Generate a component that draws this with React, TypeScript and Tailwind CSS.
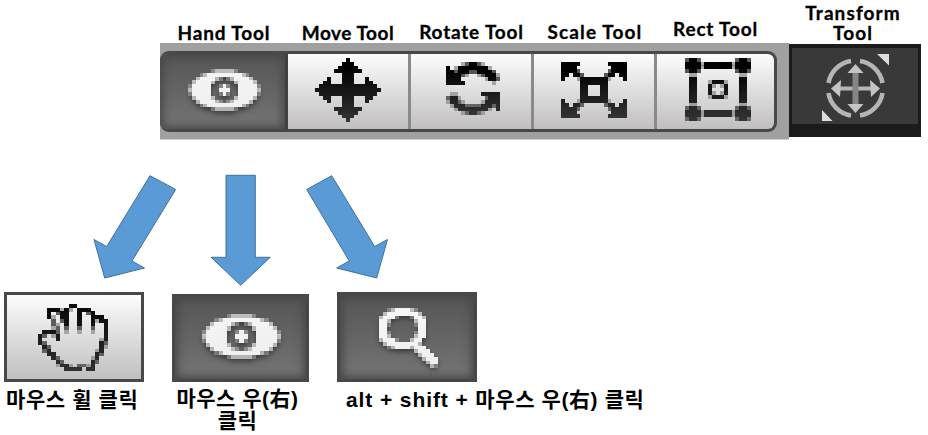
import React from "react";

type PixelProps = { rows: string[]; id: string; from: string; to: string; className: string };

const ALPHA: Record<string, number> = { "#": 1, "+": 0.65, "-": 0.3 };

function Pixels({ rows, id, from, to, className }: PixelProps) {
  const w = rows[0].length;
  const h = rows.length;
  const rects: React.ReactNode[] = [];
  rows.forEach((row, y) => {
    let x = 0;
    while (x < row.length) {
      const c = row[x];
      let end = x + 1;
      while (end < row.length && row[end] === c) end++;
      if (ALPHA[c]) {
        rects.push(<rect key={`${x}-${y}`} x={x} y={y} width={end - x} height={1.04} fillOpacity={ALPHA[c]} />);
      }
      x = end;
    }
  });
  return (
    <svg viewBox={`0 0 ${w} ${h}`} preserveAspectRatio="none" className={className}>
      <defs>
        <linearGradient id={id} gradientUnits="userSpaceOnUse" x1="0" y1="0" x2="0" y2={h}>
          <stop offset="0.15" stopColor={from} />
          <stop offset="1" stopColor={to} />
        </linearGradient>
      </defs>
      <g fill={`url(#${id})`} shapeRendering="crispEdges">{rects}</g>
    </svg>
  );
}

const MOVE = [
  "........#........",
  ".......###.......",
  "......#####......",
  ".....#######.....",
  ".......###.......",
  "...#...###...#...",
  "..##...###...##..",
  ".###############.",
  "#################",
  ".###############.",
  "..##...###...##..",
  "...#...###...#...",
  ".......###.......",
  ".....#######.....",
  "......#####......",
  ".......###.......",
  "........#........",
];

const ROTATE = [
  "....-+##+-....",
  "#.-########-..",
  "##+###++####+.",
  "####+-..-+###-",
  "####......-##+",
  "#####.......-.",
  "..............",
  "..............",
  ".--......#####",
  "+##-......+###",
  "-##+-....-####",
  ".-###++++###+#",
  "..-########-.#",
  "....-+##+-....",
];

const SCALE = [
  "#####.......#####",
  "####.........####",
  "####+.......+####",
  "##.##+.....+##.##",
  "#...-#######-...#",
  ".....#######.....",
  ".....##...##.....",
  ".....##...##.....",
  ".....##...##.....",
  ".....#######.....",
  "#...-#######-...#",
  "##.##+.....+##.##",
  "####+.......+####",
  "####.........####",
  "#####.......#####",
];

const RECT = [
  "+##+.........+##+",
  "####-#######-####",
  "####-#######-####",
  "+##+.........+##+",
  ".--...........--.",
  ".##...........##.",
  ".##...-###-...##.",
  ".##...#-.-#...##.",
  ".##...#...#...##.",
  ".##...#-.-#...##.",
  ".##...-###-...##.",
  ".##...........##.",
  ".--...........--.",
  "+##+.........+##+",
  "####-#######-####",
  "####-#######-####",
  "+##+.........+##+",
];

const EYE = [
  "......-+++++-......",
  "...-+#########+-...",
  "..+####+-.-+####+..",
  ".+####+.....+####+.",
  "-#####..-#-..#####-",
  "+#####..###..#####+",
  "-#####..-#-..#####-",
  ".+####+.....+####+.",
  "..+####+-.-+####+..",
  "...-+#########+-...",
  "......-+++++-......",
];

const HAND = [
  ".......##.......",
  "..###-#-.###....",
  "..#.+##..#.+#...",
  "..#-.##..#..###.",
  "...+.+#..#..#-##",
  "...+-.#..#..#..#",
  "...-+.+..+..+..#",
  ".###+.-..-..-..#",
  "#+.-#..........#",
  "#...#.........-#",
  "#+............#+",
  ".#+...........#-",
  ".+#..........-#.",
  "..##.........#+.",
  "...#+.......-#..",
  "....#+......#+..",
  "....-##-.++-#...",
  "......####.##...",
];

const MAGNIFIER = [
  "..-+####+-.....",
  ".+########+....",
  "+###-...-##+...",
  "##+......+##...",
  "##-......-##...",
  "##........##...",
  "##-......-##...",
  "##+......+##...",
  "+###-...+##....",
  ".+########+....",
  "..-+####+###...",
  ".........+###..",
  "..........+###.",
  "...........+###",
  "............+##",
  ".............+-",
];

const LIGHT = "bg-linear-to-b from-[#fdfdfd] to-[#c1bfc0]";
const DARK = "bg-linear-to-b from-[#555] to-[#757575] shadow-[inset_0_0_9px_3px_#484848]";

function Label({ className, children }: { className: string; children: React.ReactNode }) {
  return (
    <div className={`shrink-0 whitespace-nowrap text-center font-['Lato',sans-serif] text-[19px] leading-[20px] font-bold [-webkit-text-stroke:0.3px_black] ${className}`}>
      {children}
    </div>
  );
}

function Cell({ className, children }: { className: string; children: React.ReactNode }) {
  return <div className={`flex shrink-0 items-start ${className}`}>{children}</div>;
}

function Eye({ id, className }: { id: string; className: string }) {
  return (
    <div className={className}>
      <Pixels rows={EYE} id={id} from="#f4f4f4" to="#efefef" className="h-full w-full drop-shadow-[0_4px_2px_#3d3d3d]" />
    </div>
  );
}

function TransformIcon() {
  return (
    <svg viewBox="822 53 68 69" className="ml-[30px] mt-[5px] h-[69px] w-[68px] blur-[0.5px]" fill="none">
      <g stroke="#b5b5b5" strokeWidth="4.6">
        <path d="M851 61A27 27 0 0 0 828.5 83" />
        <path d="M860 61A27 27 0 0 1 882.500 83" />
        <path d="M828.500 93A27 27 0 0 0 851 115.500" />
        <path d="M882.500 93A27 27 0 0 1 860 115.500" />
        <path d="M838 88.500H873" strokeWidth="4" />
        <path d="M855.500 70V107" stroke="#858585" strokeWidth="6" />
      </g>
      <g fill="#c4c4c4">
        <path d="M855.500 64L863.500 73H847.500Z" />
        <path d="M855.500 113L863.500 104H847.500Z" />
        <path d="M831 88.500L841 80L840 97Z" />
        <path d="M880 88.500L870 80L871 97Z" />
        <path d="M877 54H889V65.500Z" fill="#ddd" />
        <path d="M822 110V121H832.500Z" fill="#ddd" />
      </g>
    </svg>
  );
}

const KR = "font-['Liberation_Sans','Noto_Sans_CJK_KR',sans-serif] font-bold";

export default function App() {
  return (
    <div className="h-[435px] w-[928px] overflow-hidden bg-white text-black">
      <div className="flex h-[43px] items-end pl-[160px]">
        <Label className="w-[128px] tracking-[0.85px]">Hand Tool</Label>
        <Label className="w-[120px] tracking-[0.5px]">Move Tool</Label>
        <Label className="w-[127px] pb-[1px] tracking-[0.8px]">Rotate Tool</Label>
        <Label className="w-[120px] pb-[1px] tracking-[1.1px]">Scale Tool</Label>
        <Label className="w-[121px] pb-[4px] tracking-[0.8px]">Rect Tool</Label>
        <Label className="w-[154px] tracking-[1.1px]">
          Transform
          <br />
          Tool
        </Label>
      </div>

      <div className="flex h-[97px] items-start pl-[160px]">
        <div className="h-[97px] w-[629px] shrink-0 border-b border-[#d0d0d0] bg-[#a0a0a0] pt-[8px]">
          <div className="flex h-[81px] w-[617px] overflow-hidden rounded-[9px] border-y-[3px] border-r-[3px] border-[#484848] bg-[#8a8a8a]">
            <Cell className={`w-[128px] border-r-[3px] border-[#404040] ${DARK}`}>
              <Eye id="eyeTop" className="ml-[28px] mt-[15px] h-[42px] w-[73px]" />
            </Cell>
            <Cell className={`w-[120px] ${LIGHT}`}>
              <Pixels rows={MOVE} id="move" from="#000" to="#343434" className="ml-[27px] mt-[4px] h-[64px] w-[66px]" />
            </Cell>
            <Cell className={`ml-[3px] w-[120px] ${LIGHT}`}>
              <Pixels rows={ROTATE} id="rotate" from="#000" to="#343434" className="ml-[35px] mt-[8px] h-[53px] w-[54px]" />
            </Cell>
            <Cell className={`ml-[3px] w-[120px] ${LIGHT}`}>
              <Pixels rows={SCALE} id="scale" from="#000" to="#343434" className="ml-[27px] mt-[8px] h-[56px] w-[66px]" />
            </Cell>
            <Cell className={`ml-[3px] w-[117px] rounded-r-[6px] ${LIGHT}`}>
              <Pixels rows={RECT} id="rect" from="#000" to="#343434" className="ml-[28px] mt-[4px] h-[63px] w-[66px]" />
            </Cell>
          </div>
        </div>
        <div className="mt-[1px] h-[93px] w-[132px] shrink-0 border-x-[3px] border-t-[4px] border-b-[13px] border-[#1b1b1b] bg-[#393939]">
          <TransformIcon />
        </div>
      </div>

      <div className="h-[152px] pl-[90px] pt-[32px]">
        <svg viewBox="90 172 302 116" className="h-[116px] w-[302px]" fill="#5b9bd5" stroke="#41719c" strokeWidth="1">
          <path d="M150 175.700L175.700 189.500L132 261L144.500 268L104.700 278L94 239.500L106.700 246.500Z" />
          <path d="M226 175.300H255.300V257.300H270.300L240.700 285.300L211 257.300H226Z" />
          <path d="M331.700 175.700L306.700 189.500L349.300 261L336.700 268L376.700 278L387.500 239.500L374.700 246.500Z" />
        </svg>
      </div>

      <div className="flex items-start pl-[4px]">
        <div className="w-[168px] shrink-0">
          <div className={`h-[90px] w-[140px] border-[3px] border-[#484848] ${LIGHT}`}>
            <Pixels rows={HAND} id="hand" from="#0c0c0c" to="#303030" className="ml-[31px] mt-[9px] h-[67px] w-[70px]" />
          </div>
          <div className={`ml-[2px] mt-[6px] whitespace-nowrap text-[21px] leading-[23px] tracking-[0.6px] ${KR}`}>마우스 휠 클릭</div>
        </div>
        <div className="w-[165px] shrink-0 pt-[2px]">
          <div className={`h-[88px] w-[137px] border-[3px] border-[#484848] ${DARK}`}>
            <Eye id="eyeBottom" className="ml-[27px] mt-[17px] h-[45px] w-[79px]" />
          </div>
          <div className={`mt-[6px] w-[131px] whitespace-nowrap text-center text-[21px] leading-[22px] tracking-[0.5px] ${KR}`}>
            마우스 우(右)
            <br />
            클릭
          </div>
        </div>
        <div className="w-[320px] shrink-0">
          <div className={`h-[90px] w-[140px] border-[3px] border-[#484848] ${DARK}`}>
            <Pixels rows={MAGNIFIER} id="magnifier" from="#f6f6f6" to="#eeeeee" className="ml-[39px] mt-[13px] h-[60px] w-[59px] drop-shadow-[0_3px_2px_#3d3d3d]" />
          </div>
          <div className={`ml-[9px] mt-[6px] whitespace-nowrap text-[21px] leading-[23px] ${KR}`}>
            <span className="tracking-[0.9px]">alt + shift + </span><span className="tracking-[0.6px]">마우스 우(右) 클릭</span>
          </div>
        </div>
      </div>
    </div>
  );
}
